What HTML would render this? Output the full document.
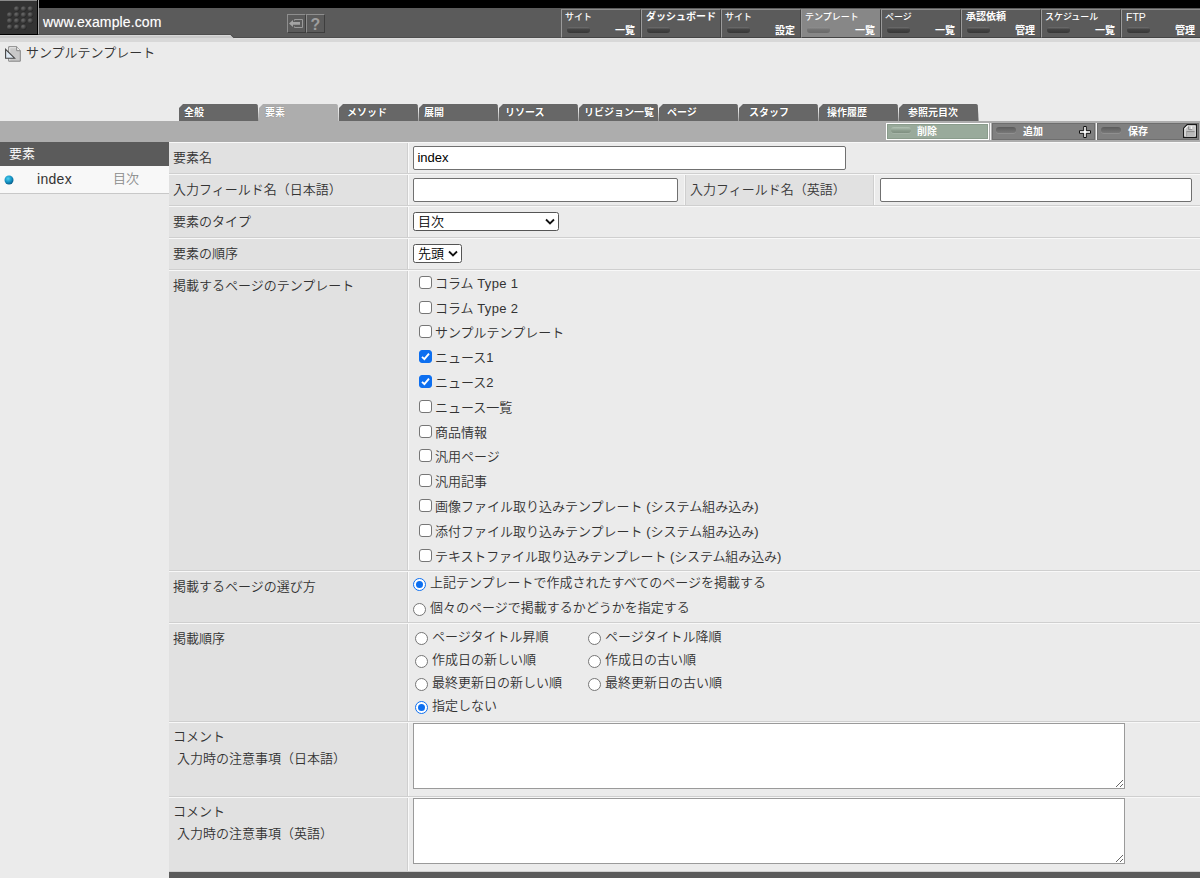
<!DOCTYPE html>
<html lang="ja">
<head>
<meta charset="utf-8">
<title>サンプルテンプレート</title>
<style>
*{box-sizing:border-box;margin:0;padding:0}
html,body{width:1200px;height:878px;overflow:hidden;background:#ebebeb;}
body{position:relative;font-family:"Liberation Sans","Noto Sans CJK JP",sans-serif;font-size:13px;color:#383838;font-weight:350}
.abs{position:absolute}
/* header */
#blackbar{left:39px;top:0;width:1161px;height:8px;background:#000}
#hdr{left:0;top:8px;width:1200px;height:30px;background:#5b5b5b}
#hdrline{left:0;top:38px;width:1200px;height:4px;background:#d8d8d8}
#logo{left:0;top:0;width:39px;height:35px;background:#333;border-right:1px solid #a4a4a4;border-bottom:1px solid #000;box-shadow:inset -1px 0 0 #000,inset 0 1px 0 #8a8a8a}
#site{left:43px;top:13px;color:#fff;font-size:14px;line-height:18px;letter-spacing:.12px;text-shadow:0 0 1px rgba(255,255,255,.4)}
#lband{left:0;top:34px;width:1200px;height:5px;}
.hbtn{top:14px;width:19px;height:19px;border:1px solid #8e8e8e;border-right-color:#3e3e3e;border-bottom-color:#3e3e3e;color:#9e9e9e;font-weight:bold;font-size:16px;line-height:19px;text-align:center}
/* menu */
.mb{top:9px;width:80px;height:29px;border-left:1px solid #9a9a9a;border-top:1px solid #8c8c8c;border-right:1px solid #444;border-bottom:1px solid #444;background:#5b5b5b;color:#fff}
.mb.on{background:#878787}
.mb .t{position:absolute;left:3px;top:1px;font-size:9px;line-height:12px;white-space:nowrap;font-weight:500}
.mb .b{position:absolute;right:5px;top:14px;font-size:10px;line-height:13px;font-weight:bold;white-space:nowrap}
.mb .p{position:absolute;left:5px;top:17px;width:23px;height:6px;border-radius:3px;background:linear-gradient(#707070,#444 40%,#383838)}
.mb.on .p{background:linear-gradient(#909090,#727272 45%,#6a6a6a)}
/* title */
#ttl{left:26px;top:44px;font-size:13px;line-height:18px;color:#333}
/* tabs */
.tab{top:104px;height:17px;width:80px;color:#fff;font-size:10px;font-weight:bold;line-height:16px;padding-left:4px;white-space:nowrap;text-shadow:0 0 1px rgba(0,0,0,.45)}
.tab svg{position:absolute;left:0;top:0}
.tab span{position:relative;top:1px}
#tbar{left:0;top:121px;width:1200px;height:21px;background:#adadad}
.ab{top:123px;height:17px;color:#fff;font-size:10px;font-weight:bold;line-height:16px;white-space:nowrap}
.ab .p{position:absolute;left:3px;top:3px;width:20px;height:6px;border-radius:3px;background:linear-gradient(#5c5c5c,#6a6a6a 50%,#787878);box-shadow:0 1px 0 rgba(255,255,255,.12)}
/* sidebar */
#sbh{left:0;top:142px;width:169px;height:24px;background:#5b5b5b;color:#fff;font-size:13px;line-height:24px;padding-left:9px}
#sbr{left:0;top:166px;width:169px;height:28px;background:#f8f8f8;border-bottom:1px solid #c8c8c8}
/* form */
.row{left:169px;width:1031px;background:#ebebeb;border-top:1px solid #f8f8f8;border-bottom:1px solid #cfcfcf}
.lab{position:absolute;left:0;top:0;bottom:0;width:239px;background:#e1e1e1;border-right:1px solid #cfcfcf;padding-left:4px;color:#333;font-size:13px}
.lab span{position:absolute;left:4px;white-space:nowrap}
.vsep{position:absolute;left:239px;top:0;bottom:0;width:1px;background:#fafafa}
.lab2{position:absolute;top:0;bottom:0;background:#e1e1e1;border-left:1px solid #cfcfcf;border-right:1px solid #cfcfcf;box-shadow:-1px 0 0 #f6f6f6,1px 0 0 #fafafa;font-size:13px}
.lab2 span{position:absolute;left:4px;top:4px;white-space:nowrap}
.inp.sel{border-radius:2.5px;border-color:#555}
.inp.ta{border-radius:0;border-color:#9a9a9a}
.tx{position:absolute;font-size:13px;line-height:18px;color:#333;white-space:nowrap}
.inp{position:absolute;background:#fff;border:1px solid #707070;border-radius:2px}
.cb{position:absolute;width:13px;height:13px;border:1px solid #767676;border-radius:3px;background:#fff}
.cb.on{background:#0d6ff0;border-color:#0d6ff0}
.rd{position:absolute;width:13px;height:13px;border:1px solid #767676;border-radius:50%;background:#fff}
.rd.on{border:1.5px solid #0d6ff0}
.rd.on::after{content:"";position:absolute;left:50%;top:50%;width:7px;height:7px;margin:-3.5px 0 0 -3.5px;border-radius:50%;background:#0d6ff0}
</style>
</head>
<body>
<div class="abs" id="blackbar"></div>
<div class="abs" id="hdr"></div>
<div class="abs" id="hdrline"></div>
<svg class="abs" id="lband" width="1200" height="5" viewBox="0 0 1200 5"><path d="M0 1H230.5L233.5 4H0Z" fill="#c9c9c9"/><path d="M0 1.5H230.3" stroke="#d8d8d8" stroke-width="1" fill="none"/><path d="M234 4.5H1200" stroke="#dfdfdf" stroke-width="1" fill="none"/><path d="M0 0.5H230.7L233.7 3.5H1200" stroke="#4e4e4e" stroke-width="1" fill="none"/></svg>
<div class="abs" id="logo">
<svg width="38" height="35" viewBox="0 0 38 35">
<defs><radialGradient id="dg" cx="36%" cy="32%" r="68%"><stop offset="0" stop-color="#6c6c6c"/><stop offset=".5" stop-color="#4c4c4c"/><stop offset="1" stop-color="#262626"/></radialGradient></defs>
<g fill="url(#dg)">
<circle cx="16.8" cy="9.0" r="2.8"/><circle cx="23.7" cy="9.0" r="2.8"/><circle cx="30.5" cy="9.0" r="2.8"/>
<circle cx="9.8" cy="15.0" r="2.8"/><circle cx="16.8" cy="15.0" r="2.8"/><circle cx="23.7" cy="15.0" r="2.8"/><circle cx="30.5" cy="15.0" r="2.8"/>
<circle cx="9.8" cy="21.0" r="2.8"/><circle cx="16.8" cy="21.0" r="2.8"/><circle cx="23.7" cy="21.0" r="2.8"/><circle cx="30.5" cy="21.0" r="2.8"/>
<circle cx="9.8" cy="27.2" r="2.8"/><circle cx="16.8" cy="27.2" r="2.8"/><circle cx="23.7" cy="27.2" r="2.8"/>
</g></svg>
</div>
<div class="abs" id="site">www.example.com</div>
<div class="abs hbtn" style="left:287px">
<svg width="17" height="17" viewBox="0 0 17 17" style="position:absolute;left:0;top:0"><path d="M6.5 5.6V4.5H14.5V12.5H6.5V11.4" fill="none" stroke="#9a9a9a" stroke-width="1"/><path d="M1 8.4L5 4.9V7H12V9.8H5V11.9Z" fill="#a4a4a4"/></svg>
</div>
<div class="abs hbtn" style="left:306px">?</div>

<!-- menu buttons -->
<div class="abs mb" style="left:561px"><span class="t">サイト</span><span class="p"></span><span class="b">一覧</span></div>
<div class="abs mb" style="left:641px"><span class="t" style="font-weight:bold;font-size:10px;left:4px">ダッシュボード</span><span class="p"></span></div>
<div class="abs mb" style="left:721px"><span class="t">サイト</span><span class="p"></span><span class="b">設定</span></div>
<div class="abs mb on" style="left:801px"><span class="t">テンプレート</span><span class="p"></span><span class="b">一覧</span></div>
<div class="abs mb" style="left:881px"><span class="t">ページ</span><span class="p"></span><span class="b">一覧</span></div>
<div class="abs mb" style="left:961px"><span class="t" style="font-weight:bold;font-size:10px;left:4px">承認依頼</span><span class="p"></span><span class="b">管理</span></div>
<div class="abs mb" style="left:1041px"><span class="t">スケジュール</span><span class="p"></span><span class="b">一覧</span></div>
<div class="abs mb" style="left:1121px"><span class="t" style="font-size:10.5px;left:4px">FTP</span><span class="p"></span><span class="b">管理</span></div>

<!-- title -->
<svg class="abs" style="left:5px;top:45px" width="17" height="18" viewBox="0 0 17 18">
<path d="M3.7 1.7H11.7L15.3 5.7V16.2H3.7Z" fill="#c8c8c8" stroke="#858585" stroke-width="1"/>
<path d="M4.7 15.5V2.7H11" fill="none" stroke="#e6e6e6" stroke-width="1"/>
<path d="M11.7 1.7V5.7H15.3" fill="#f4f4f4" stroke="#858585" stroke-width="1"/>
<path d="M0.6 4.4V13.2H9.6Z" fill="#dfe9f3" stroke="#444" stroke-width="1.1"/>
</svg>
<div class="abs" id="ttl">サンプルテンプレート</div>

<!-- tabs -->
<div id="tabs">
<div class="abs tab" style="left:179px;padding-left:5px"><svg width="80" height="17" viewBox="0 0 80 17"><path d="M0 17V4L4 0H77.2Q78.6 0 78.8 1.5L79.6 17Z" fill="#676767"/></svg><span>全般</span></div>
<div class="abs tab" style="left:259px;padding-left:6px"><svg width="80" height="17" viewBox="0 0 80 17"><path d="M0 17V4L4 0H77.2Q78.6 0 78.8 1.5L79.6 17Z" fill="#adadad"/></svg><span>要素</span></div>
<div class="abs tab" style="left:339px;padding-left:8px"><svg width="80" height="17" viewBox="0 0 80 17"><path d="M0 17V4L4 0H77.2Q78.6 0 78.8 1.5L79.6 17Z" fill="#676767"/></svg><span>メソッド</span></div>
<div class="abs tab" style="left:419px;padding-left:5px"><svg width="80" height="17" viewBox="0 0 80 17"><path d="M0 17V4L4 0H77.2Q78.6 0 78.8 1.5L79.6 17Z" fill="#676767"/></svg><span>展開</span></div>
<div class="abs tab" style="left:499px;padding-left:6px"><svg width="80" height="17" viewBox="0 0 80 17"><path d="M0 17V4L4 0H77.2Q78.6 0 78.8 1.5L79.6 17Z" fill="#676767"/></svg><span>リソース</span></div>
<div class="abs tab" style="left:579px;padding-left:5px"><svg width="80" height="17" viewBox="0 0 80 17"><path d="M0 17V4L4 0H77.2Q78.6 0 78.8 1.5L79.6 17Z" fill="#676767"/></svg><span>リビジョン一覧</span></div>
<div class="abs tab" style="left:659px;padding-left:8px"><svg width="80" height="17" viewBox="0 0 80 17"><path d="M0 17V4L4 0H77.2Q78.6 0 78.8 1.5L79.6 17Z" fill="#676767"/></svg><span>ページ</span></div>
<div class="abs tab" style="left:739px;padding-left:10px"><svg width="80" height="17" viewBox="0 0 80 17"><path d="M0 17V4L4 0H77.2Q78.6 0 78.8 1.5L79.6 17Z" fill="#676767"/></svg><span>スタッフ</span></div>
<div class="abs tab" style="left:819px;padding-left:8px"><svg width="80" height="17" viewBox="0 0 80 17"><path d="M0 17V4L4 0H77.2Q78.6 0 78.8 1.5L79.6 17Z" fill="#676767"/></svg><span>操作履歴</span></div>
<div class="abs tab" style="left:899px;padding-left:9px"><svg width="80" height="17" viewBox="0 0 80 17"><path d="M0 17V4L4 0H77.2Q78.6 0 78.8 1.5L79.6 17Z" fill="#676767"/></svg><span>参照元目次</span></div>
</div><!--/tabs-->
<div class="abs" id="tbar"></div>

<!-- action buttons -->
<div class="abs ab" style="left:886px;width:103px;background:#99aa9b;border:1px solid #fff;box-shadow:inset 0 0 0 1px #8a9c8c"><span class="p" style="left:4px;background:linear-gradient(#b4c4b6,#8c9d8e 60%,#7f9081)"></span><span style="position:absolute;left:30px;top:0">削除</span></div>
<div class="abs" style="left:990px;top:123px;width:1px;height:17px;background:#f4f4f4"></div>
<div class="abs ab" style="left:992px;width:103px;background:#808080;border:1px solid #6e6e6e"><span class="p"></span><span style="position:absolute;left:30px;top:0">追加</span>
<svg style="position:absolute;left:85px;top:0.5px" width="14" height="14" viewBox="0 0 14 14"><path d="M5.7 1.5H8.3V5.7H12.5V8.3H8.3V12.5H5.7V8.3H1.5V5.7H5.7Z" fill="#fff" stroke="#111" stroke-width="1"/></svg></div>
<div class="abs" style="left:1096px;top:123px;width:1px;height:17px;background:#f4f4f4"></div>
<div class="abs ab" style="left:1097px;width:102px;background:#808080;border:1px solid #6e6e6e"><span class="p"></span><span style="position:absolute;left:30px;top:0">保存</span>
<svg style="position:absolute;left:85px;top:0px" width="15" height="15" viewBox="0 0 15 15"><path d="M4.2 0.6H13.4V13.4H0.6V4.2Z" fill="#fff" stroke="#1a1a1a" stroke-width="1.2"/><path d="M5 2.3H11.9V12.3H2.3V5Z" fill="#c6c6c6"/><path d="M5.6 2.4V5.6H9.2" fill="none" stroke="#8a8a8a" stroke-width="1"/><rect x="7.8" y="2.3" width="1.4" height="2.8" fill="#f4f4f4"/><rect x="3.4" y="7.6" width="8.2" height="5" fill="#bababa"/><path d="M3.4 7.6H11.6" stroke="#8a8a8a" stroke-width="1"/><path d="M3.6 7.6V12.6" stroke="#9a9a9a" stroke-width=".8"/></svg></div>

<!-- sidebar -->
<div class="abs" id="sbh">要素</div>
<div class="abs" id="sbr">
<svg style="position:absolute;left:4px;top:9px" width="10" height="10" viewBox="0 0 10 10"><defs><radialGradient id="bg" cx="40%" cy="35%" r="65%"><stop offset="0" stop-color="#4fd0f0"/><stop offset=".6" stop-color="#1493c4"/><stop offset="1" stop-color="#0a5f8c"/></radialGradient></defs><circle cx="5" cy="5" r="4.5" fill="url(#bg)"/></svg>
<span class="tx" style="left:37px;top:4px;font-size:14px;letter-spacing:.3px">index</span>
<span class="tx" style="left:113px;top:4px;font-size:13px;color:#8a8a8a">目次</span>
</div>

<div id="form">
<div class="abs row" style="top:142px;height:32px"><div class="lab"><span style="top:4px">要素名</span></div><div class="vsep"></div><div class="inp" style="left:244px;top:3px;width:433px;height:24px"><span class="tx" style="left:3.4px;top:2px;color:#000;font-size:13px">index</span></div></div>
<div class="abs row" style="top:174px;height:32px"><div class="lab"><span style="top:4px">入力フィールド名（日本語）</span></div><div class="vsep"></div><div class="inp" style="left:244px;top:3px;width:265px;height:24px"></div><div class="lab2" style="left:516px;width:189px"><span>入力フィールド名（英語）</span></div><div class="inp" style="left:711px;top:3px;width:312px;height:24px"></div></div>
<div class="abs row" style="top:206px;height:32px"><div class="lab"><span style="top:4px">要素のタイプ</span></div><div class="vsep"></div><div class="inp sel" style="left:244px;top:5px;width:146px;height:19px"><span class="tx" style="left:4px;top:0px;color:#000">目次</span><svg style="position:absolute;right:3px;top:5px" width="10" height="7" viewBox="0 0 10 7"><path d="M1 1.5L5 5.4L9 1.5" fill="none" stroke="#111" stroke-width="1.8"/></svg></div></div>
<div class="abs row" style="top:238px;height:32px"><div class="lab"><span style="top:4px">要素の順序</span></div><div class="vsep"></div><div class="inp sel" style="left:244px;top:5px;width:49px;height:19px"><span class="tx" style="left:4px;top:0px;color:#000">先頭</span><svg style="position:absolute;right:3px;top:5px" width="10" height="7" viewBox="0 0 10 7"><path d="M1 1.5L5 5.4L9 1.5" fill="none" stroke="#111" stroke-width="1.8"/></svg></div></div>
<div class="abs row" style="top:270px;height:301px"><div class="lab"><span style="top:4px">掲載するページのテンプレート</span></div><div class="vsep"></div><div class="cb" style="left:250px;top:5px"></div><span class="tx" style="left:266px;top:4px">コラム <span style="letter-spacing:.35px">Type 1</span></span><div class="cb" style="left:250px;top:30px"></div><span class="tx" style="left:266px;top:29px">コラム <span style="letter-spacing:.35px">Type 2</span></span><div class="cb" style="left:250px;top:54px"></div><span class="tx" style="left:266px;top:53px">サンプルテンプレート</span><div class="cb on" style="left:250px;top:79px"><svg width="13" height="13" viewBox="0 0 13 13" style="position:absolute;left:-1px;top:-1px"><path d="M3 6.8L5.4 9.2L10 3.6" fill="none" stroke="#fff" stroke-width="1.9"/></svg></div><span class="tx" style="left:266px;top:78px">ニュース1</span><div class="cb on" style="left:250px;top:104px"><svg width="13" height="13" viewBox="0 0 13 13" style="position:absolute;left:-1px;top:-1px"><path d="M3 6.8L5.4 9.2L10 3.6" fill="none" stroke="#fff" stroke-width="1.9"/></svg></div><span class="tx" style="left:266px;top:103px">ニュース2</span><div class="cb" style="left:250px;top:129px"></div><span class="tx" style="left:266px;top:128px">ニュース一覧</span><div class="cb" style="left:250px;top:154px"></div><span class="tx" style="left:266px;top:153px">商品情報</span><div class="cb" style="left:250px;top:178px"></div><span class="tx" style="left:266px;top:177px">汎用ページ</span><div class="cb" style="left:250px;top:203px"></div><span class="tx" style="left:266px;top:202px">汎用記事</span><div class="cb" style="left:250px;top:228px"></div><span class="tx" style="left:266px;top:227px">画像ファイル取り込みテンプレート (システム組み込み)</span><div class="cb" style="left:250px;top:253px"></div><span class="tx" style="left:266px;top:252px">添付ファイル取り込みテンプレート (システム組み込み)</span><div class="cb" style="left:250px;top:278px"></div><span class="tx" style="left:266px;top:277px;letter-spacing:-.1px">テキストファイル取り込みテンプレート (システム組み込み)</span></div>
<div class="abs row" style="top:571px;height:52px"><div class="lab"><span style="top:4px">掲載するページの選び方</span></div><div class="vsep"></div><div class="rd on" style="left:244px;top:6px"></div><span class="tx" style="left:261px;top:2px">上記テンプレートで作成されたすべてのページを掲載する</span><div class="rd" style="left:244px;top:31px"></div><span class="tx" style="left:261px;top:27px">個々のページで掲載するかどうかを指定する</span></div>
<div class="abs row" style="top:623px;height:99px"><div class="lab"><span style="top:4px">掲載順序</span></div><div class="vsep"></div><div class="rd" style="left:246px;top:8px"></div><span class="tx" style="left:263px;top:4px">ページタイトル昇順</span><div class="rd" style="left:419px;top:8px"></div><span class="tx" style="left:436px;top:4px">ページタイトル降順</span><div class="rd" style="left:246px;top:31px"></div><span class="tx" style="left:263px;top:27px">作成日の新しい順</span><div class="rd" style="left:419px;top:31px"></div><span class="tx" style="left:436px;top:27px">作成日の古い順</span><div class="rd" style="left:246px;top:54px"></div><span class="tx" style="left:263px;top:50px">最終更新日の新しい順</span><div class="rd" style="left:419px;top:54px"></div><span class="tx" style="left:436px;top:50px">最終更新日の古い順</span><div class="rd on" style="left:246px;top:77px"></div><span class="tx" style="left:263px;top:73px">指定しない</span></div>
<div class="abs row" style="top:722px;height:75px"><div class="lab"><span style="top:3px;left:4px">コメント</span><span style="top:25px;left:8px">入力時の注意事項（日本語）</span></div><div class="vsep"></div><div class="inp ta" style="left:244px;top:0px;width:712px;height:66px"><svg style="position:absolute;right:0px;bottom:0px" width="9" height="9" viewBox="0 0 9 9"><path d="M1 8L8 1M5 8L8 5" stroke="#666" stroke-width="1"/></svg></div></div>
<div class="abs row" style="top:797px;height:75px"><div class="lab"><span style="top:3px;left:4px">コメント</span><span style="top:25px;left:8px">入力時の注意事項（英語）</span></div><div class="vsep"></div><div class="inp ta" style="left:244px;top:0px;width:712px;height:66px"><svg style="position:absolute;right:0px;bottom:0px" width="9" height="9" viewBox="0 0 9 9"><path d="M1 8L8 1M5 8L8 5" stroke="#666" stroke-width="1"/></svg></div></div>
</div><!--/form-->
<div class="abs" style="left:169px;top:872px;width:1031px;height:6px;background:#5b5b5b"></div>
</body>
</html>
